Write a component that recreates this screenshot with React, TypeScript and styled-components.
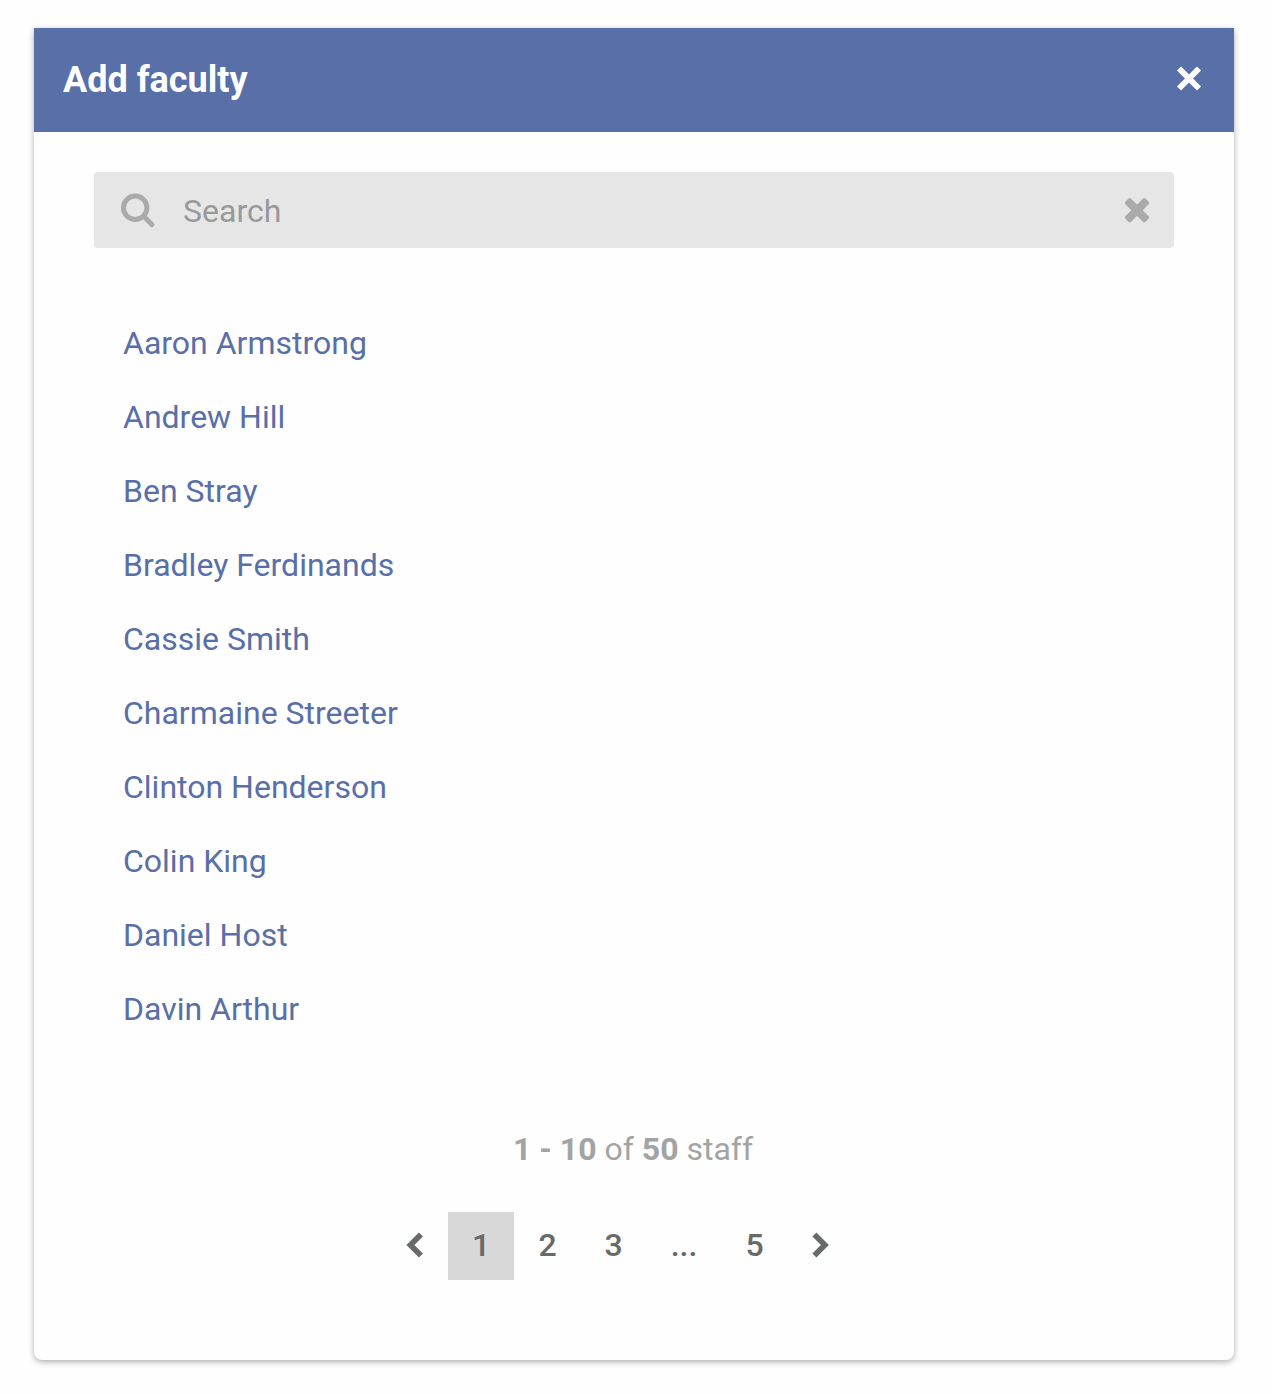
import React from "react";
import styled, { createGlobalStyle } from "styled-components";

const GlobalStyle = createGlobalStyle`
  *, *::before, *::after { box-sizing: border-box; }
  body {
    margin: 0;
    background: #fefefe;
    font-family: Roboto, "Liberation Sans", sans-serif;
  }
`;

const Page = styled.div`
  height: 1394px;
  padding: 28px 38px 34px 34px;
`;

const Dialog = styled.section`
  display: flex;
  flex-direction: column;
  height: 1332px;
  background: #fefefe;
  border-radius: 0 0 8px 8px;
  box-shadow: 0 2px 6px rgba(0, 0, 0, 0.32);
`;

const Header = styled.header`
  display: flex;
  align-items: center;
  justify-content: space-between;
  height: 104px;
  padding: 0 29px;
  background: #596fa8;
  color: #fff;
`;

const Title = styled.h1`
  margin: 0;
  font-size: 36px;
  line-height: 44px;
  font-weight: 700;
`;

const IconButton = styled.button`
  display: flex;
  flex: none;
  padding: 0;
  border: 0;
  background: none;
  color: inherit;
`;

const CloseButton = styled(IconButton)`
  padding-bottom: 3px;
`;

const SearchField = styled.label`
  display: flex;
  align-items: center;
  height: 76px;
  margin: 40px 60px 0;
  padding: 0 21px 0 25px;
  border-radius: 4px;
  background: #e6e6e6;
  color: #aaa;
`;

const SearchInput = styled.input`
  flex: 1;
  min-width: 0;
  height: 44px;
  margin: 2px 0 0 28px;
  padding: 0;
  border: 0;
  outline: 0;
  background: transparent;
  color: #999;
  font: 400 32px/44px Roboto, "Liberation Sans", sans-serif;
  &::placeholder { color: #999; opacity: 1; }
`;

const PeopleList = styled.ul`
  margin: 58px 0 0;
  padding: 0 89px;
  list-style: none;
`;

const Person = styled.li`
  height: 74px;
  color: #596fa8;
  font-size: 32px;
  line-height: 74px;
`;

const Summary = styled.p`
  margin: 81px 0 0;
  padding-right: 2px;
  text-align: center;
  color: #a2a4a3;
  font-size: 32px;
  line-height: 44px;
`;

const Pagination = styled.nav`
  display: flex;
  align-items: center;
  height: 68px;
  margin: 41px 0 0 348px;
  color: #666a6a;
`;

const ArrowButton = styled(IconButton)`
  justify-content: center;
  width: 66px;
  padding-bottom: 2px;
`;

const PageItem = styled.span<{ $active?: boolean; $width?: number }>`
  width: ${(p) => p.$width ?? 66}px;
  height: 68px;
  padding-left: ${(p) => (p.$active ? 0 : 1)}px;
  background: ${(p) => (p.$active ? "#d8d8d8" : "transparent")};
  text-align: center;
  font-size: 32px;
  font-weight: 500;
  line-height: 67px;
`;

const people = [
  "Aaron Armstrong",
  "Andrew Hill",
  "Ben Stray",
  "Bradley Ferdinands",
  "Cassie Smith",
  "Charmaine Streeter",
  "Clinton Henderson",
  "Colin King",
  "Daniel Host",
  "Davin Arthur",
];

const CloseIcon = () => (
  <svg width="32" height="32" viewBox="0 0 32 32" fill="none" stroke="currentColor" strokeWidth="5.8">
    <path d="M6 5.5 26 25.5M26 5.5 6 25.5" />
  </svg>
);

const ClearIcon = () => (
  <svg width="32" height="32" viewBox="0 0 32 32" fill="currentColor">
    <rect x="1.8" y="12.2" width="28.4" height="8" rx="2" transform="rotate(45 16 16.2)" />
    <rect x="1.8" y="12.2" width="28.4" height="8" rx="2" transform="rotate(-45 16 16.2)" />
  </svg>
);

const SearchIcon = () => (
  <svg width="36" height="36" viewBox="0 0 36 36" fill="none" stroke="currentColor" strokeWidth="5">
    <circle cx="16.2" cy="15.7" r="11.7" />
    <path d="m25 24.5 7.8 8" strokeLinecap="round" />
  </svg>
);

const ChevronIcon = ({ direction }: { direction: "left" | "right" }) => (
  <svg width="26" height="32" viewBox="0 0 26 32" fill="none" stroke="currentColor" strokeWidth="5.6">
    <path d={direction === "left" ? "M18.9 5.5 8.4 16 18.9 26.5" : "M7.4 5.5 17.9 16 7.4 26.5"} />
  </svg>
);

export default function App() {
  return (
    <>
      <GlobalStyle />
      <Page>
        <Dialog>
          <Header>
            <Title>Add faculty</Title>
            <CloseButton aria-label="Close"><CloseIcon /></CloseButton>
          </Header>
          <SearchField>
            <SearchIcon />
            <SearchInput placeholder="Search" />
            <IconButton aria-label="Clear"><ClearIcon /></IconButton>
          </SearchField>
          <PeopleList>
            {people.map((name) => <Person key={name}>{name}</Person>)}
          </PeopleList>
          <Summary><b>1 - 10</b> of <b>50</b> staff</Summary>
          <Pagination>
            <ArrowButton aria-label="Previous"><ChevronIcon direction="left" /></ArrowButton>
            <PageItem $active>1</PageItem>
            <PageItem>2</PageItem>
            <PageItem>3</PageItem>
            <PageItem $width={75}>...</PageItem>
            <PageItem>5</PageItem>
            <ArrowButton aria-label="Next"><ChevronIcon direction="right" /></ArrowButton>
          </Pagination>
        </Dialog>
      </Page>
    </>
  );
}
